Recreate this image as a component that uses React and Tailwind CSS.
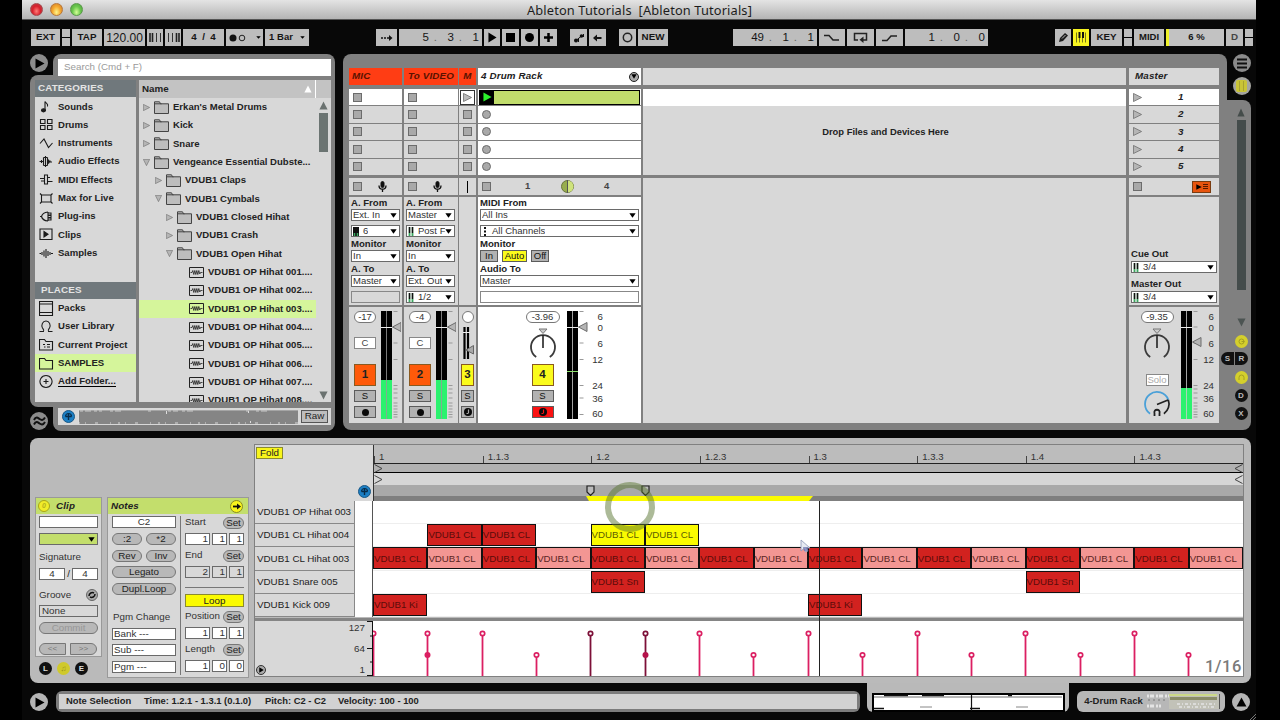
import clsx from 'clsx';

const categories = [
  ['Sounds', 'note'],
  ['Drums', 'pads'],
  ['Instruments', 'wave'],
  ['Audio Effects', 'audio'],
  ['MIDI Effects', 'midi'],
  ['Max for Live', 'max'],
  ['Plug-ins', 'plug'],
  ['Clips', 'clip'],
  ['Samples', 'sample'],
];

const places = [
  ['Packs', 'pack'],
  ['User Library', 'user'],
  ['Current Project', 'project'],
  ['SAMPLES', 'folder'],
  ['Add Folder...', 'add'],
];

const tree = [
  { name: "Erkan's Metal Drums", level: 0 },
  { name: 'Kick', level: 0 },
  { name: 'Snare', level: 0 },
  { name: 'Vengeance Essential Dubste...', level: 0, open: true },
  { name: 'VDUB1 Claps', level: 1 },
  { name: 'VDUB1 Cymbals', level: 1, open: true },
  { name: 'VDUB1 Closed Hihat', level: 2 },
  { name: 'VDUB1 Crash', level: 2 },
  { name: 'VDUB1 Open Hihat', level: 2, open: true },
  { name: 'VDUB1 OP Hihat 001....', file: true },
  { name: 'VDUB1 OP Hihat 002....', file: true },
  { name: 'VDUB1 OP Hihat 003....', file: true, selected: true },
  { name: 'VDUB1 OP Hihat 004....', file: true },
  { name: 'VDUB1 OP Hihat 005....', file: true },
  { name: 'VDUB1 OP Hihat 006....', file: true },
  { name: 'VDUB1 OP Hihat 007....', file: true },
  { name: 'VDUB1 OP Hihat 008....', file: true },
];

const levels = ['pl-[4px]', 'pl-[16px]', 'pl-[27px]'];

const iconPaths = {
  note: 'M6 11.5V2.5c1 2 3.500 2 2.500 5',
  pads: 'M1.500 2.500h4.500v4h-4.500zM8.500 2.500h4.500v4h-4.500zM1.500 8.500h4.500v4h-4.500zM8.500 8.500h4.500v4h-4.500z',
  wave: 'M1 7.500L5 3L9.500 11.500L13.500 7',
  audio: 'M0.500 7.500h2v-1.500v3v-1.500h2M8.500 7.500h1v-2v4l1.500-3v1.500h2M4.500 3.500v8M6.500 2v11M8.500 3.500v8M4.500 3.500h4M4.500 11.500h4',
  midi: 'M1 6.500h4.500M2 9h3.500M5.500 3h3v9h-3zM8.500 5.500h2.500M8.500 9.500h5',
  max: 'M2.500 4h9.500v7h-9.500zM2.500 4L1 2.500M12 4l1.500-1.500M2.500 11L1 12.500M12 11l1.500 1.500',
  plug: 'M1 7.500h1.500M9 3C4 3.500 3 5.500 2.500 7.500C3 9.500 4 11.500 9 12M9 3v9M9 4h3v2h-3M9 6.500h3v2h-3M9 9h3v2h-3',
  clip: 'M1 2h12v10.500h-12z',
  sample: 'M0.500 7.500h1.500M3 6v3M5 4.500v6M7 3v9M9 5v5M11 6v3M12 7.500h2',
  pack: 'M0.500 0.500h13v14h-13zM0.500 3h13M0.500 11.500h13',
  user: 'M0.500 12.500h4c1-1 0-2-1-3.500c-1.500-3 0-7 3.500-7s5 4 3.500 7c-1 1.500-2 2.500-1 3.500h4',
  project: 'M0.500 2.500h5l1.500 2h6.500v8.500h-13zM4 7.500h2M8 7.500h3M5 10h1.500M8 10h3',
  folder: 'M0.500 2.500h5l1.500 2h6.500v8.500h-13z',
  add: 'M7 1.500a6 6 0 1 0 0.010 0M4.500 7.500h5M7 5v5',
};

function CatIcon({ name }) {
  return (
    <svg width="15" height="15" viewBox="0 0 15 15" fill="none" stroke="#1b1b1b" strokeWidth="1.1">
      <path d={iconPaths[name]} />
      {name === 'note' && <ellipse cx="4.5" cy="11.3" rx="2" ry="1.6" fill="#1b1b1b" />}
      {name === 'clip' && <path d="M5 4.500v5.500l4-2.750z" fill="#1b1b1b" />}
    </svg>
  );
}

function Tri({ dir = 'down', w = 8, h = 6, fill = '#000', stroke }) {
  const d = {
    down: '0.500,0.500 9.500,0.500 5,9.500',
    up: '0.500,9.500 9.500,9.500 5,0.500',
    right: '0.500,0.500 9.500,5 0.500,9.500',
    left: '9.500,0.500 0.500,5 9.500,9.500',
  }[dir];
  return (
    <svg width={w} height={h} viewBox="0 0 10 10" preserveAspectRatio="none" className="shrink-0">
      <polygon points={d} fill={fill} stroke={stroke} />
    </svg>
  );
}

function Folder() {
  return (
    <svg width="15" height="13" viewBox="0 0 15 13" fill="#bdbdbd" stroke="#444" strokeWidth="1" className="shrink-0">
      <path d="M0.500 12.500V0.800h5l1 2h8v9.700z" />
      <path d="M0.500 2.800h7" />
    </svg>
  );
}

function SampleFile() {
  return (
    <svg width="15" height="11" viewBox="0 0 15 11" fill="none" stroke="#222" className="shrink-0">
      <path d="M0.500 0.500h14v10h-14z" />
      <path d="M1.500 5.500l1.500 0l0.800-2l1 4l1-4l1 4l1-4l1 4l1-4l1 3.500l0.700-1.500h2" strokeWidth="0.8" />
    </svg>
  );
}

function TB({ w, children, className = 'bg-[#bdbdbd]', font = 'text-[9.800px] font-bold' }) {
  return (
    <div className={clsx('flex h-[17px] shrink-0 items-center justify-center whitespace-pre text-[#151515]', w, font, className)}>
      {children}
    </div>
  );
}

function Round({ children, size = 'size-[18px]', className = 'bg-[#8c8c8c]' }) {
  return (
    <div className={clsx('flex shrink-0 items-center justify-center rounded-full', size, className)}>
      {children}
    </div>
  );
}

function TitleBar() {
  return (
    <div className="flex h-[20px] items-center border-b border-[#555] bg-gradient-to-b from-[#e4e4e4] to-[#b4b4b4] pl-[8px]">
      <div className="flex w-[60px] gap-[7px]">
        <div className="size-[13px] rounded-full border border-[#a3484c] bg-radial-[at_50%_65%] from-[#ff7d78] via-[#d8202c] to-[#b5434a]" />
        <div className="size-[13px] rounded-full border border-[#b8783a] bg-radial-[at_50%_75%] from-[#fff58a] via-[#f5a92f] to-[#c9762a]" />
        <div className="size-[13px] rounded-full border border-[#5a9a4a] bg-radial-[at_50%_75%] from-[#d4ff96] via-[#6cc94e] to-[#4d9b3d]" />
      </div>
      <div className="ml-[437px] pt-px font-['Noto_Sans',sans-serif] text-[12.800px] leading-none tracking-[0.150px] whitespace-pre text-[#1c1c1c]">
        {'Ableton Tutorials  [Ableton Tutorials]'}
      </div>
    </div>
  );
}

function Bars({ flip }) {
  return (
    <svg width="13" height="9" className={flip ? '-scale-x-100' : ''}>
      <path d="M1 0v9M3.500 0v9" stroke="#222" strokeWidth="1.600" />
      <path d="M7.500 0v9M11.500 0v9" stroke="#333" strokeWidth="1" />
    </svg>
  );
}

function Nub({ w }) {
  return (
    <div className={clsx('flex h-[17px] shrink-0 flex-col gap-px bg-black', w)}>
      <div className="flex-1 bg-[#bdbdbd]" />
      <div className="flex-1 bg-[#bdbdbd]" />
    </div>
  );
}

// Bar / beat / sixteenth read-out.
function Position({ w, values }) {
  return (
    <TB w={w} className="justify-end bg-[#bdbdbd] pr-[3px]" font="text-[11.500px]">
      {values.map((v, i) => (
        <span key={i} className={clsx('text-right', i && 'w-[25px]')}>
          {v}
          {i < 2 && <span className="-mr-[8px] inline-block w-[8px] text-right text-[#666]">.</span>}
        </span>
      ))}
    </TB>
  );
}

function Toolbar() {
  return (
    <div className="flex h-[34px] pt-[9px] pl-[9px]">
      <div className="flex w-[345px] gap-[2px]">
        <TB w="w-[29px]">EXT</TB>
        <Nub w="w-[8px]" />
        <TB w="w-[30px]">TAP</TB>
        <TB w="w-[41px]" font="text-[12px]">120.00</TB>
        <TB w="w-[16px]"><Bars /></TB>
        <TB w="w-[16px]"><Bars flip /></TB>
        <TB w="w-[41px]">4  /  4</TB>
        <TB w="w-[37px]" className="gap-[2px] bg-[#bdbdbd]">
          <svg width="18" height="8"><circle cx="4" cy="4" r="3.500" fill="#111" /><circle cx="13" cy="4" r="2.800" fill="none" stroke="#222" /></svg>
          <span className="w-[5px]" />
          <Tri w={5} h={3} />
        </TB>
        <TB w="w-[44px]" className="gap-[7px] bg-[#bdbdbd]" font="text-[9.500px] font-bold">1 Bar<Tri w={5} h={3} /></TB>
      </div>
      <div className="flex w-[357px] gap-[2px]">
        <TB w="w-[21px]">
          <svg width="12" height="8"><path d="M0 4h2M3 4h2M6 4h3" stroke="#111" strokeWidth="1.500" /><path d="M8 1v6l3.500-3z" fill="#111" /></svg>
        </TB>
        <Position w="w-[83px]" values={[5, 3, 1]} />
        <TB w="w-[16px]"><Tri dir="right" w={9} h={11} /></TB>
        <TB w="w-[17px]"><div className="size-[9px] bg-black" /></TB>
        <TB w="w-[17px]"><div className="size-[9px] rounded-full bg-black" /></TB>
        <TB w="w-[17px]"><svg width="9" height="9"><path d="M4.500 0v9M0 4.500h9" stroke="#000" strokeWidth="2.500" /></svg></TB>
        <TB w="w-[17px] ml-[11px]">
          <svg width="12" height="10"><circle cx="3" cy="7.500" r="2" fill="#111" /><circle cx="8.500" cy="3" r="1.800" fill="#111" /><path d="M3 7.500L8.500 3M10.500 1v3M5.500 6v3" stroke="#111" /></svg>
        </TB>
        <TB w="w-[17px]">
          <svg width="9" height="8"><path d="M2 4h6.500" stroke="#111" strokeWidth="2" /><path d="M0 4l4-3.500v7z" fill="#111" /></svg>
        </TB>
        <TB w="w-[17px] ml-[11px]"><svg width="11" height="11"><circle cx="5.500" cy="5.500" r="4.200" fill="none" stroke="#222" strokeWidth="1.500" /></svg></TB>
        <TB w="w-[30px]">NEW</TB>
      </div>
      <div className="flex w-[322px] gap-[2px]">
        <Position w="w-[84px]" values={[49, 1, 1]} />
        <TB w="w-[26px]"><svg width="16" height="8"><path d="M0 1.500h5l4 4.500h6" fill="none" stroke="#222" strokeWidth="1.500" /></svg></TB>
        <TB w="w-[27px]"><svg width="15" height="11"><path d="M5 8H1.500V1.500h12V8H10" fill="none" stroke="#222" strokeWidth="1.500" /><path d="M10.500 4.500v6.500l-4-3.200z" fill="#222" /></svg></TB>
        <TB w="w-[27px]"><svg width="16" height="8"><path d="M0 6.500h5l4-4.500h6" fill="none" stroke="#222" strokeWidth="1.500" /></svg></TB>
        <Position w="w-[83px]" values={[1, 0, 0]} />
      </div>
      <div className="flex gap-[2px]">
        <TB w="w-[16px]">
          <svg width="11" height="11"><path d="M1 10l1-4L7 1l3 2.500L5 9z" fill="#1c1c1c" /><path d="M4 6.500l3.500-3.500" stroke="#bbb" /></svg>
        </TB>
        <TB w="w-[16px]" className="bg-[#f8f520]">
          <svg width="10" height="11"><path d="M0.500 0.500v10M3.500 0.500v10M6.500 0.500v10M9.500 0.500v10" stroke="#77771a" /><path d="M2.500 0h2v6h-2zM6 0h2v6h-2z" fill="#111" /></svg>
        </TB>
        <TB w="w-[31px]">KEY</TB>
        <Nub w="w-[8px]" />
        <TB w="w-[30px]" font="text-[9.500px] font-bold">MIDI</TB>
        <TB w="w-[58px]" className="border-l-[3px] border-[#eef02a] bg-[#c2c2c2]" font="text-[9.500px] font-bold">6 %</TB>
        <TB w="w-[17px]"><span className="text-[#444]">D</span></TB>
        <Nub w="w-[8px]" />
      </div>
    </div>
  );
}

function TreeRow({ item }) {
  return (
    <div
      className={clsx(
        'flex h-[18.340px] w-[177px] shrink-0 items-center text-[9.550px] font-bold whitespace-nowrap',
        item.file ? 'pl-[50px]' : levels[item.level],
        item.selected && 'bg-[#d5f59b]'
      )}
    >
      {item.file ? (
        <SampleFile />
      ) : (
        <>
          <Tri dir={item.open ? 'down' : 'right'} w={7} h={7} fill="#b5b5b5" stroke="#7a7a7a" />
          <span className="w-[4px]" />
          <Folder />
        </>
      )}
      <span className="ml-[4px]">{item.name}</span>
    </div>
  );
}

function Browser() {
  return (
    <div className="w-[305px]">
      <div className="flex h-[21px] justify-between">
        <Round><span className="ml-[2px]"><Tri dir="right" w={10} h={11} /></span></Round>
        <div className="w-[282px] rounded-t-lg bg-[#808080] pt-[5px] pr-[4px] pl-[5px]">
          <div className="flex h-[17px] items-center bg-white pl-[6px] text-[9.800px] text-[#9a9a9a]">Search (Cmd + F)</div>
        </div>
      </div>
      <div className="flex h-[332px] gap-[3px] rounded-l-lg bg-[#808080] py-[5px] pr-[4px] pl-[5px]">
        <div className="w-[101px] bg-[#d8d8d8]">
          <div className="flex h-[17px] items-center bg-[#70787c] pl-[3px] text-[9.800px] font-bold tracking-[0.150px] text-[#e4e4e4]">CATEGORIES</div>
          {categories.map(([name, icon]) => (
            <div key={name} className="flex h-[18.340px] items-center gap-[4px] pt-px pl-[4px] text-[9.550px] font-bold">
              <CatIcon name={icon} />
              {name}
            </div>
          ))}
          <div className="mt-[20px] flex h-[17px] items-center bg-[#70787c] pl-[6px] text-[9.800px] font-bold tracking-[0.150px] text-[#e4e4e4]">PLACES</div>
          {places.map(([name, icon]) => (
            <div
              key={name}
              className={clsx('flex h-[18.340px] items-center gap-[4px] pl-[4px] text-[9.550px] font-bold whitespace-nowrap', name === 'SAMPLES' && 'bg-[#d5f59b]')}
            >
              <CatIcon name={icon} />
              <span className={icon === 'add' ? 'border-b border-black leading-[11px]' : ''}>{name}</span>
            </div>
          ))}
        </div>
        <div className="w-[192px] bg-[#d8d8d8]">
          <div className="flex h-[18px] bg-[#c3c3c3] text-[9.800px] font-bold">
            <div className="flex w-[177px] items-center justify-between border-r border-white pr-[3px] pl-[3px]">
              Name
              <Tri dir="up" w={8} h={8} fill="#fff" />
            </div>
          </div>
          <div className="flex h-[304px] overflow-hidden">
            <div className="flex flex-col">
              {tree.map(item => (
                <TreeRow key={item.name} item={item} />
              ))}
            </div>
            <div className="flex h-[304px] w-[15px] flex-col items-center pt-[3px] pb-[2px]">
              <Tri dir="up" w={9} h={9} fill="#6b7270" />
              <div className="mt-[3px] h-[39px] w-[9px] bg-[#6b7472]" />
              <div className="flex-1" />
              <Tri w={9} h={9} fill="#6b7270" />
            </div>
          </div>
        </div>
      </div>
      <div className="flex h-[24px] justify-between">
        <Round size="size-[18px] mt-[5px]">
          <svg width="13" height="10" fill="none" stroke="#111" strokeWidth="2"><path d="M1 4c2-4 4-2 5.500-1s3.500 2 5.500-1.500M1 8.500c2-4 4-2 5.500-1s3.500 2 5.500-1.500" /></svg>
        </Round>
        <div className="w-[282px] rounded-b-lg bg-[#808080] pt-[1px] pr-[4px] pl-[5px]">
          <div className="flex h-[17px] items-center bg-[#d8d8d8] pl-[4px]">
            <PreviewIcon />
            <svg width="220" height="14" className="ml-[3px] bg-[#858585]">
              <path d="M0 0.500h220" stroke="#a5a5a5" />
              <path d="M2 1h22M32 1h12M70 1h3M90 1h10M104 1h12M168 1h5M178 1h14" stroke="#ccc" strokeDasharray="3 2 6 3" />
              <path d="M0 13h220" stroke="#d8d8d8" strokeDasharray="2 5 1 9 3 12 1 7" />
              <path d="M0.500 0v14M88.500 1v3M170.500 1v2M172.500 11v2" stroke="#ddd" />
            </svg>
            <div className="ml-[3px] flex h-[13px] w-[27px] items-center justify-center border border-[#555] bg-[#bdbdbd] text-[9.800px]">Raw</div>
          </div>
        </div>
      </div>
    </div>
  );
}

function PreviewIcon() {
  return (
    <svg width="13" height="13" className="shrink-0">
      <circle cx="6.500" cy="6.500" r="6" fill="#1c7fc4" stroke="#1a5784" />
      <path d="M6.500 10V4M3.500 6.500h6" stroke="#082b47" strokeWidth="1.400" />
      <path d="M3.500 6.500A3 3 0 0 1 9.500 6.500" fill="none" stroke="#082b47" strokeWidth="1.200" />
    </svg>
  );
}

function Stop({ round }) {
  return <div className={clsx('size-[9px] border border-[#6c6c6c] bg-[#a9a9a9]', round && 'rounded-full')} />;
}

function ChanIcon({ dark }) {
  return (
    <svg width="6" height="9" className="shrink-0">
      <rect width="6" height="9" fill={dark ? '#111' : '#d8e8dc'} />
      <path d="M1.500 0v6M4.500 0v6" stroke="#111" strokeWidth="1.500" />
      <path d="M1.500 6v3M4.500 6v3" stroke="#3aa860" strokeWidth="1.500" />
    </svg>
  );
}

function Select({ children, className, icon, bg = 'bg-white' }) {
  return (
    <div className={clsx('flex h-[12px] items-center justify-between overflow-hidden border border-[#6a6a6a] pr-[2px] pl-[1px] text-[9.500px] leading-none text-[#333]', bg, className)}>
      <div className="flex items-center gap-[4px] overflow-hidden whitespace-nowrap">
        {icon}
        {children}
      </div>
      <Tri w={7} h={5} />
    </div>
  );
}

function Label({ children, className }) {
  return <div className={clsx('flex h-[12px] items-center text-[9.600px] leading-none font-bold text-[#222]', className)}>{children}</div>;
}

// One mixer column: header, five slots, stop row, routing, mixer strip.
function Track({ w, head, headClass, slots, stop, io, mixer, bg = 'bg-[#d8d8d8]' }) {
  return (
    <div className={clsx('flex shrink-0 flex-col', w)}>
      <div className={clsx('flex h-[17px] items-center text-[9.800px] font-bold tracking-[0.150px] italic', headClass)}>{head}</div>
      <div className="mt-[4px] grid h-[86px] grid-rows-5 gap-px">{slots}</div>
      <div className="mt-[3px] flex h-[17px] items-center bg-[#d8d8d8]">{stop}</div>
      <div className={clsx('mt-[2px] h-[108px]', bg)}>{io}</div>
      <div className={clsx('mt-[2px] h-[116px]', bg)}>{mixer}</div>
    </div>
  );
}

function Mic() {
  return (
    <svg width="9" height="12" fill="none" stroke="#111">
      <rect x="3" y="0.500" width="3" height="6" rx="1.500" fill="#111" />
      <path d="M1 4.500c0 5 7 5 7 0M4.500 8v3" strokeWidth="1.300" />
    </svg>
  );
}

const tickYs = [0.5, 16, 32, 48.5, 74.5, 78, 82, 87, 92, 95, 98, 101, 103.5, 106];
const mainTicks = [0.5, 16, 32, 48.5, 74.5, 87, 103.5];
const scale = [[6, 5], [0, 16.5], [6, 32], [12, 48.500], [24, 74.500], [36, 87.500], [60, 102.500]];

function Meter({ green, fader = 16, peak, labels, ticks = tickYs, width = 20 }) {
  return (
    <svg width={width} height="108" className="shrink-0">
      <rect width="11" height="108" fill="#000" />
      {green && <rect y={green} width="11" height={108 - green} fill="#2bf26e" />}
      <path d="M5.500 0v108" stroke={labels ? '#ccc' : '#999'} strokeWidth="0.800" />
      <path d="M0 16.500h11" stroke="#eee" strokeWidth="1" />
      {peak && <path d={`M0 ${peak}h11`} stroke="#8be06a" />}
      {ticks.map(y => (
        <path key={y} d={`M12.500 ${y}h4`} stroke="#999" />
      ))}
      <polygon points={`11.500,${fader} 20,${fader - 4.5} 20,${fader + 4.5}`} fill="#b5b5b5" stroke="#6c6c6c" />
      {labels &&
        scale.map(([n, y]) => (
          <text key={y} x={width - 1} y={y + 3.5} textAnchor="end" fontSize="9.7" fill="#333">{n}</text>
        ))}
    </svg>
  );
}

function Pill({ children, w = 'w-[22px]' }) {
  return (
    <div className={clsx('flex h-[12px] items-center justify-center rounded-full border border-[#777] bg-white text-[9.500px] leading-none text-[#333]', w)}>
      {children}
    </div>
  );
}

function Knob() {
  return (
    <svg width="28" height="34" fill="none">
      <polygon points="10,1 18,1 14,5.500" fill="#ccc" stroke="#777" />
      <path d="M7.200 29A12 12 0 1 1 20.800 29" stroke="#3a3a3a" strokeWidth="1.800" />
      <path d="M14 7v13" stroke="#222" strokeWidth="1.600" />
    </svg>
  );
}

function NumBox({ n, className }) {
  return <div className={clsx('flex h-[22px] items-center justify-center border border-[#8a5a20] text-[11.500px] font-bold text-[#222]', className)}>{n}</div>;
}

function SmallBtn({ children, className }) {
  return <div className={clsx('flex h-[12px] items-center justify-center border border-[#5c5c5c] text-[9.500px] leading-none text-[#111]', className)}>{children}</div>;
}

const Dot = () => <div className="size-[7px] rounded-full bg-[#0a0a0a]" />;

const Spin = ({ mark = '#aaa' }) => (
  <svg width="8" height="8"><circle cx="4" cy="4" r="4" fill="#0a0a0a" /><path d="M4.500 1.500v3.500M2.500 5.500h2" stroke={mark} strokeWidth="1.200" /></svg>
);

function Strip({ n, vol, pad }) {
  return (
    <div className={clsx('flex pt-[4px]', pad)}>
      <div className="w-[22px]">
        <Pill>{vol}</Pill>
        <div className="mt-[14px] flex h-[12px] items-center justify-center border border-[#888] bg-white text-[9.500px] leading-none text-[#444]">C</div>
        <NumBox n={n} className="mt-[15px] bg-[#ff5a0a]" />
        <SmallBtn className="mt-[4px] bg-[#b2b2b2]">S</SmallBtn>
        <SmallBtn className="mt-[4px] bg-[#b2b2b2]"><Dot /></SmallBtn>
      </div>
      <span className="w-[5px]" />
      <Meter green={69} />
    </div>
  );
}

function narrowSlots() {
  return [0, 1, 2, 3, 4].map(i => (
    <div key={i} className={clsx('flex items-center pl-[4px]', i === 0 ? 'bg-white' : 'bg-[#d8d8d8]')}>
      <Stop />
    </div>
  ));
}

function Session() {
  return (
    <div className="flex h-[376px] w-[884px] rounded-l-lg rounded-tr-lg bg-[#808080] pt-[14px] pl-[6px]">
      <Track
        w="w-[53px] mr-[2px]"
        head="MIC"
        headClass="bg-[#ff3d14] pl-[3px] text-[#5a1200]"
        slots={narrowSlots()}
        stop={<div className="flex items-center pl-[4px]"><Stop /><span className="w-[16px]" /><Mic /></div>}
        io={
          <div className="w-[51px] pl-[2px]">
            <Label>A. From</Label>
            <Select>Ext. In</Select>
            <Select className="mt-[4px]" icon={<ChanIcon dark />}>6</Select>
            <Label className="mt-[1px]">Monitor</Label>
            <Select>In</Select>
            <Label className="mt-[1px]">A. To</Label>
            <Select>Master</Select>
            <div className="mt-[4px] h-[12px] border border-[#888]" />
          </div>
        }
        mixer={<Strip n="1" vol="-17" pad="pl-[5px]" />}
      />
      <Track
        w="w-[54px] mr-[1px]"
        head="To VIDEO"
        headClass="bg-[#ff3d14] pl-[4px] text-[#5a1200] whitespace-nowrap"
        slots={narrowSlots()}
        stop={<div className="flex items-center pl-[4px]"><Stop /><span className="w-[16px]" /><Mic /></div>}
        io={
          <div className="w-[51px] pl-[2px]">
            <Label>A. From</Label>
            <Select>Master</Select>
            <Select className="mt-[4px]" icon={<ChanIcon />}>Post F</Select>
            <Label className="mt-[1px]">Monitor</Label>
            <Select>In</Select>
            <Label className="mt-[1px]">A. To</Label>
            <Select>Ext. Out</Select>
            <Select className="mt-[4px]" icon={<ChanIcon />}>1/2</Select>
          </div>
        }
        mixer={<Strip n="2" vol="-4" pad="pl-[5px]" />}
      />
      <Track
        w="w-[17px] mr-[2px]"
        head="M"
        headClass="bg-[#ff3d14] justify-center text-[#5a1200]"
        slots={[0, 1, 2, 3, 4].map(i => (
          <div key={i} className={clsx('flex items-center justify-center', i ? 'bg-[#d8d8d8]' : 'bg-white')}>
            {i ? <Stop /> : <div className="flex size-[15px] items-center justify-center border border-[#333]"><Tri dir="right" w={9} h={9} fill="#bbb" stroke="#777" /></div>}
          </div>
        ))}
        stop={<div className="mx-auto h-[12px] w-px bg-black" />}
        mixer={
          <div className="flex flex-col items-center pt-[4px]">
            <div className="size-[12px] rounded-full border border-[#777] bg-white" />
            <svg width="13" height="34" className="mt-[3px] ml-[4px]">
              <path d="M1.500 1v32M5 1v32" stroke="#000" strokeWidth="2.200" />
              <path d="M0 6.500h7" stroke="#eee" />
              <polygon points="3,24 10.500,19.500 10.500,28" fill="#aaa" stroke="#666" />
            </svg>
            <NumBox n="3" className="mt-[4px] w-[13px] bg-[#fbfb1c]" />
            <SmallBtn className="mt-[4px] w-[13px] bg-[#b2b2b2]">S</SmallBtn>
            <SmallBtn className="mt-[4px] w-[13px] bg-[#b2b2b2]"><Spin /></SmallBtn>
          </div>
        }
      />
      <Track
        w="w-[163px] mr-[2px]"
        bg="bg-white"
        head={
          <>
            <span className="flex-1">4 Drum Rack</span>
            <Round size="size-[10px]" className="border border-[#222] bg-[#aaa]"><Tri w={6} h={5} /></Round>
          </>
        }
        headClass="bg-white pl-[3px] pr-[2px] text-[#222]"
        slots={[0, 1, 2, 3, 4].map(i =>
          i ? (
            <div key={i} className="flex items-center bg-white pl-[4px]"><Stop round /></div>
          ) : (
            <div key={i} className="flex items-center bg-white px-px">
              <div className="flex h-[15px] w-full border border-black bg-[#c1dd6c]">
                <div className="flex w-[14px] items-center justify-center bg-black"><Tri dir="right" w={9} h={10} fill="#2cf02c" /></div>
              </div>
            </div>
          )
        )}
        stop={
          <div className="flex items-center pl-[4px] text-[9.500px] font-bold text-[#444]">
            <Stop />
            <span className="ml-[34px] w-[36px]">1</span>
            <svg width="13" height="13"><circle cx="6.500" cy="6.500" r="6" fill="#98ad4e" stroke="#6a753e" /><path d="M6.500 0.500a6 6 0 0 1 0 12z" fill="#cfe37c" /><path d="M6.500 0v13" stroke="#555" /></svg>
            <span className="ml-[30px]">4</span>
          </div>
        }
        io={
          <div className="w-[161px] pl-[2px]">
            <Label>MIDI From</Label>
            <Select>All Ins</Select>
            <Select className="mt-[4px]" icon={<svg width="6" height="9"><path d="M3 0v9" stroke="#111" strokeWidth="2" strokeDasharray="2 1.500" /></svg>}>All Channels</Select>
            <Label className="mt-[1px]">Monitor</Label>
            <div className="flex gap-[4px]">
              <SmallBtn className="w-[18px] bg-[#b2b2b2]">In</SmallBtn>
              <SmallBtn className="w-[25px] bg-[#fbfb1c]">Auto</SmallBtn>
              <SmallBtn className="w-[18px] bg-[#b2b2b2]">Off</SmallBtn>
            </div>
            <Label className="mt-[1px]">Audio To</Label>
            <Select>Master</Select>
            <div className="mt-[4px] h-[12px] border border-[#888]" />
          </div>
        }
        mixer={
          <div className="flex pt-[4px] pl-[47px]">
            <div className="flex w-[35px] flex-col items-center">
              <Pill w="w-[34px]">-3.96</Pill>
              <div className="mt-[5px]"><Knob /></div>
              <NumBox n="4" className="mt-[2px] w-[22px] bg-[#fbfb1c]" />
              <SmallBtn className="mt-[4px] w-[22px] bg-[#b2b2b2]">S</SmallBtn>
              <SmallBtn className="mt-[4px] w-[22px] bg-[#fb1212]"><Spin mark="#fb1212" /></SmallBtn>
            </div>
            <span className="w-[7px]" />
            <Meter labels width={37} peak={60.500} ticks={mainTicks} />
          </div>
        }
      />
      <div className="mr-[3px] flex w-[483px] flex-col">
        <div className="h-[17px] bg-[#d8d8d8]" />
        <div className="mt-[4px] h-[17px] bg-white" />
        <div className="flex h-[69px] justify-center bg-[#d8d8d8] pt-[19px] pl-[2px] text-[9.400px] font-bold text-[#222]">Drop Files and Devices Here</div>
        <div className="mt-[3px] h-[245px] bg-[#d8d8d8]" />
      </div>
      <Track
        w="w-[90px]"
        head="Master"
        headClass="bg-[#d8d8d8] pl-[6px] text-[#222]"
        slots={[1, 2, 3, 4, 5].map(n => (
          <div key={n} className={clsx('flex items-center pl-[4px] text-[9.800px] font-bold italic', n === 1 ? 'bg-white' : 'bg-[#d8d8d8]')}>
            <Tri dir="right" w={9} h={9} fill="#b5b5b5" stroke="#777" />
            <span className="ml-[36px]">{n}</span>
          </div>
        ))}
        stop={
          <div className="flex items-center pl-[4px]">
            <Stop />
            <div className="ml-[50px] flex h-[12px] w-[19px] items-center justify-center gap-px border border-[#7a3c10] bg-[#e8550f]">
              <Tri dir="right" w={6} h={6} />
              <svg width="5" height="7"><path d="M0 1.500h5M0 3.500h5M0 5.500h5" stroke="#5a1a00" /></svg>
            </div>
          </div>
        }
        io={
          <div className="w-[88px] pt-[51px] pl-[2px]">
            <Label>Cue Out</Label>
            <Select className="mt-[1px]" icon={<ChanIcon />}>3/4</Select>
            <Label className="mt-[5px]">Master Out</Label>
            <Select className="mt-[1px]" icon={<ChanIcon />}>3/4</Select>
          </div>
        }
        mixer={
          <div className="flex pt-[4px] pl-[11px]">
            <div className="flex w-[34px] flex-col items-center">
              <Pill w="w-[33px]">-9.35</Pill>
              <div className="mt-[5px]"><Knob /></div>
              <div className="mt-[12px] flex h-[12px] w-[23px] items-center justify-center border border-[#888] bg-white text-[9.500px] leading-none text-[#aaa]">Solo</div>
              <svg width="28" height="27" fill="none" className="mt-[4px]">
                <path d="M7.100 23.800A12 12 0 1 1 25.300 9.900" stroke="#4aa0d8" strokeWidth="1.800" />
                <path d="M25.300 9.900A12 12 0 0 1 20.900 23.800M14 14.500l11-4.500" stroke="#222" strokeWidth="1.700" />
                <path d="M11.500 26v-2.500c-1.500-5 6.500-5 5 0v2.500" stroke="#222" strokeWidth="1.800" />
              </svg>
            </div>
            <span className="w-[7px]" />
            <Meter green={77} fader={31} labels width={34} />
          </div>
        }
      />
    </div>
  );
}

function SideRail() {
  return (
    <div className="flex h-[376px] w-[24px] flex-col">
      <div className="flex h-[46px] flex-col items-center gap-[5px] pl-[5px]">
        <Round><svg width="10" height="11"><path d="M0 1.500h10M0 5.500h10M0 9.500h10" stroke="#111" strokeWidth="2.200" /></svg></Round>
        <Round className="bg-[#a5a5a0]"><svg width="11" height="12"><rect width="11" height="12" rx="2" fill="#c9c436" /><path d="M3.500 1v10M7.500 1v10" stroke="#a8a230" /></svg></Round>
      </div>
      <div className="flex flex-1 flex-col items-center rounded-r-lg bg-[#808080] pt-[8px] pl-[4px]">
        <Tri dir="up" w={8} h={9} fill="#444c4a" />
        <div className="mt-[3px] h-[170px] w-[9px] bg-[#444c4b]" />
        <div className="mt-[28px]"><Tri w={9} h={9} fill="#4c5452" /></div>
        <Badge className="mt-[8px] bg-[#d4cf2c] text-[#a5a020]">
          <svg width="7" height="7" fill="none" stroke="#a5a020"><circle cx="3.500" cy="3.500" r="2.500" /><path d="M3.500 3.500h3" /></svg>
        </Badge>
        <div className="mt-[4px] -ml-[13px] flex">
          <Badge className="w-[12px] rounded-r-none bg-[#111] text-[#bbb]">S</Badge>
          <Badge className="ml-px w-[12px] rounded-l-none bg-[#111] text-[#bbb]">R</Badge>
        </div>
        <Badge className="mt-[6px] bg-[#d4cf2c]">
          <svg width="7" height="7" fill="none" stroke="#a5a020"><path d="M1 6V3.500a2.500 2.500 0 0 1 5 0V6" /></svg>
        </Badge>
        <Badge className="mt-[5px] bg-[#111] text-[#bbb]">D</Badge>
        <Badge className="mt-[5px] bg-[#111] text-[#bbb]">X</Badge>
      </div>
    </div>
  );
}

function Badge({ children, className }) {
  return <div className={clsx('flex h-[13px] min-w-[13px] items-center justify-center rounded-full text-[8px] leading-none font-bold', className)}>{children}</div>;
}

function Field({ children, className, bg = 'bg-white' }) {
  return <div className={clsx('flex h-[12px] items-center border border-[#6a6a6a] text-[9.800px] leading-none text-[#333]', bg, className)}>{children}</div>;
}

function Oval({ children, className, radius = 'rounded-full', font = 'text-[9.800px] text-[#222]' }) {
  return <div className={clsx('flex h-[12px] items-center justify-center border border-[#777] bg-[#b8b8b8] leading-none', radius, font, className)}>{children}</div>;
}

function ClipBox() {
  return (
    <div className="mt-[59px] w-[67px] text-[9.800px]">
      <div className="h-[160px] border border-[#999] bg-[#d8d8d8]">
        <div className="flex h-[16px] items-center gap-[6px] bg-[#c3de6c] pl-[2px] font-bold tracking-[0.150px] italic">
          <Round size="size-[12px]" className="border border-[#a8a418] bg-[#f0ec2a] text-[7px] text-[#b5b020]">0</Round>
          Clip
        </div>
        <div className="px-[3px] pt-[2px]">
          <Field />
          <Select className="mt-[5px]" bg="bg-[#c3de6c]" />
          <div className="mt-[6px] flex h-[13px] items-center text-[9.800px] text-[#333]">Signature</div>
          <div className="mt-[3px] flex items-center justify-between">
            <Field className="w-[26px] justify-center">4</Field>/
            <Field className="w-[26px] justify-center">4</Field>
          </div>
          <div className="mt-[7px] flex h-[13px] items-center justify-between text-[9.800px] text-[#333]">
            Groove
            <Round size="size-[12px]" className="border border-[#666] bg-[#aaa]">
              <svg width="8" height="8" fill="none" stroke="#111" strokeWidth="1.500"><path d="M1 5C1 2 4 1 6 2M7 3C7 6 4 7 2 6" /></svg>
            </Round>
          </div>
          <Field className="mt-[3px] pl-[2px]" bg="bg-[#d8d8d8]">None</Field>
          <Oval className="mt-[5px]" font="text-[9.800px] text-[#979797]">Commit</Oval>
          <div className="mt-[9px] flex gap-[4px]">
            <Oval className="w-[27px]" radius="rounded-l-full" font="text-[8px] text-[#777]">&lt;&lt;</Oval>
            <Oval className="w-[27px]" radius="rounded-r-full" font="text-[8px] text-[#777]">&gt;&gt;</Oval>
          </div>
        </div>
      </div>
      <div className="mt-[5px] flex gap-[5px] pl-[4px]">
        <Badge className="bg-[#111] text-[#ddd]">L</Badge>
        <Badge className="bg-[#cfc92c] text-[#9a951c]">♫</Badge>
        <Badge className="bg-[#111] text-[#ddd]">E</Badge>
      </div>
    </div>
  );
}

function SetRow({ label, values, dim, className }) {
  return (
    <div className={className}>
      <div className="flex h-[13px] items-center justify-between text-[9.800px] text-[#333]">
        {label}
        <Oval className="w-[21px]">Set</Oval>
      </div>
      <div className="mt-[4px] flex justify-between">
        {values.map((v, i) => (
          <Field key={i} className={clsx('justify-end pr-px', i ? 'w-[15px]' : 'w-[25px]')} bg={dim ? 'bg-[#d8d8d8]' : 'bg-white'}>{v}</Field>
        ))}
      </div>
    </div>
  );
}

function NotesBox() {
  return (
    <div className="mt-[59px] ml-[5px] h-[181px] w-[142px] border border-[#999] bg-[#d8d8d8] text-[9.800px]">
      <div className="flex h-[16px] items-center justify-between bg-[#c3de6c] pr-[5px] pl-[3px] font-bold tracking-[0.150px] italic">
        Notes
        <Round size="size-[13px]" className="border border-[#8a8a20] bg-[#f8f51c]">
          <svg width="8" height="7"><path d="M0 3.500h5" stroke="#111" strokeWidth="1.800" /><path d="M4 0.500v6l4-3z" fill="#111" /></svg>
        </Round>
      </div>
      <div className="flex pt-[2px] pl-[4px]">
        <div className="w-[64px]">
          <Field className="justify-center">C2</Field>
          <div className="mt-[5px] grid grid-cols-2 gap-x-[4px] gap-y-[4.500px]">
            <Oval>:2</Oval><Oval>*2</Oval>
            <Oval>Rev</Oval><Oval>Inv</Oval>
            <Oval className="col-span-2">Legato</Oval>
            <Oval className="col-span-2">Dupl.Loop</Oval>
          </div>
          <div className="mt-[17px] flex h-[12px] items-center pl-px text-[9.800px] whitespace-nowrap text-[#333]">Pgm Change</div>
          <Field className="mt-[4px] pl-px">Bank ---</Field>
          <Field className="mt-[4.500px] pl-px">Sub ---</Field>
          <Field className="mt-[4.500px] pl-px">Pgm ---</Field>
        </div>
        <div className="ml-[4px] h-[159px] w-px bg-[#777]" />
        <div className="ml-[4px] w-[59px]">
          <SetRow label="Start" values={[1, 1, 1]} />
          <SetRow label="End" values={[2, 1, 1]} dim className="mt-[4px]" />
          <div className="mt-[9px] h-px bg-[#777]" />
          <div className="mt-[6px] flex h-[13px] items-center justify-center border border-[#8a8a30] bg-[#fbfb00] leading-none">Loop</div>
          <SetRow label="Position" values={[1, 1, 1]} className="mt-[3px]" />
          <SetRow label="Length" values={[1, 0, 0]} className="mt-[4px]" />
        </div>
      </div>
    </div>
  );
}

const keys = ['VDUB1 OP Hihat 003', 'VDUB1 CL Hihat 004', 'VDUB1 CL Hihat 003', 'VDUB1 Snare 005', 'VDUB1 Kick 009'];

const noteColors = {
  red: 'bg-[#d2221f] text-[#5a0c0a]',
  pink: 'bg-[#f39693] text-[#5a2523]',
  yellow: 'bg-[#fbfb00] text-[#5b5b00]',
};

const noteRows = [
  [],
  [[2, 'red'], [3, 'red'], [5, 'yellow'], [6, 'yellow']].map(([c, k]) => [c, k, 'VDUB1 CL']),
  Array.from({ length: 16 }, (_, i) => [i + 1, i % 2 ? 'pink' : 'red', 'VDUB1 CL']),
  [[5, 'red', 'VDUB1 Sn'], [13, 'red', 'VDUB1 Sn']],
  [[1, 'red', 'VDUB1 Ki'], [9, 'red', 'VDUB1 Ki']],
];

const rulerLabels = ['1', '1.1.3', '1.2', '1.2.3', '1.3', '1.3.3', '1.4', '1.4.3'];

function Ruler() {
  return (
    <div className="w-[870px] border-l border-[#333]">
      <div className="grid h-[19px] grid-cols-8 border-b border-[#222] bg-[#bcbcbc]">
        {rulerLabels.map(l => (
          <div key={l} className="flex items-end">
            <div className="h-[7px] w-px bg-[#444]" />
            <span className="ml-[4px] text-[9.600px] leading-[12px] text-[#333]">{l}</span>
          </div>
        ))}
      </div>
      <div className="flex h-[9px] items-center justify-between border-b border-black bg-[#b1b1b1]">
        <Chevron />
        <Chevron left />
      </div>
      <div className="flex h-[12px] items-center justify-between bg-[#d6d6d6]">
        <Chevron />
        <Chevron left />
      </div>
      <div className="h-[11px] bg-[#a9a9a9] pl-[212px]">
        <svg width="70" height="11" fill="#bbb" stroke="#222" strokeWidth="1.200">
          <path d="M1 1h7v6l-3.500 3.500L1 7zM56 1h7v6l-3.500 3.500L56 7z" />
        </svg>
      </div>
      <div className="h-[5px] bg-[#7f7f7f] pl-[212px]">
        <svg width="228" height="5"><polygon points="0,0 227,0 223,5 3,5" fill="#fbfb00" /></svg>
      </div>
    </div>
  );
}

function Chevron({ left }) {
  return (
    <svg width="9" height="9" className={left ? '-scale-x-100' : ''}>
      <path d="M0.500 0.500L8 4.500L0.500 8.500" fill="none" stroke="#444" />
    </svg>
  );
}

function Velocity() {
  const step = 54.35;
  return (
    <svg width="870" height="55" className="bg-white">
      {Array.from({ length: 16 }, (_, i) => {
        const x = Math.round(i * step) + 0.5;
        const high = i % 2 === 0 || i === 1 || i === 5;
        const color = i === 4 || i === 5 ? '#7d1038' : '#db1f62';
        return (
          <g key={i}>
            <path d={`M${x} ${high ? 15 : 36}V55`} stroke={color} strokeWidth="1.800" />
            <circle cx={x} cy={high ? 12.5 : 34} r="2.200" fill="#fff" stroke={color} strokeWidth="1.700" />
            {(i === 1 || i === 5) && <circle cx={x} cy="34" r="3" fill={i === 5 ? '#b5124a' : color} />}
          </g>
        );
      })}
      <text x="869" y="51" textAnchor="end" fontSize="16.5" letterSpacing="0.600" fill="#7a7a7a" fontWeight="500" fontFamily="Roboto, sans-serif">1/16</text>
    </svg>
  );
}

function Editor() {
  return (
    <div className="relative mt-[6px] ml-[5px] flex h-[233px] w-[990px] flex-col border border-[#808080]">
      <div className="flex h-[56px]">
        <div className="w-[118px] shrink-0 bg-[#d8d8d8] pt-[2px] pl-[1px]">
          <div className="flex h-[12px] w-[27px] items-center justify-center border border-[#8a8a30] bg-[#f8f51c] text-[9.800px] leading-none">Fold</div>
          <div className="mt-[26px] ml-[102px]"><PreviewIcon /></div>
        </div>
        <Ruler />
      </div>
      <div className="flex h-[117px]">
        <div className="flex w-[100px] shrink-0 flex-col border-r border-[#888] bg-[#d8d8d8]">
          {keys.map(k => (
            <div key={k} className="flex h-[23.200px] items-center border-b border-[#888] pt-px pl-[2px] text-[9.800px] text-[#222]">{k}</div>
          ))}
        </div>
        <div className="w-[18px] shrink-0 border-r border-[#555] bg-white" />
        <div className="w-[870px] bg-white">
          {noteRows.map((row, i) => (
            <div key={i} className="grid h-[23.200px] grid-cols-16 border-b border-[#eee]">
              {row.map(([col, color, text]) => (
                <div
                  key={col}
                  className={clsx('row-start-1 flex h-[22px] items-center overflow-hidden border border-[#111] text-[9.700px] leading-none whitespace-nowrap', noteColors[color])}
                  style={{ gridColumnStart: col }}
                >
                  <span>{text}</span>
                </div>
              ))}
            </div>
          ))}
        </div>
      </div>
      <div className="mt-px h-[3px] bg-[#858585]" />
      <div className="flex h-[55px]">
        <div className="flex w-[118px] shrink-0 items-end bg-[#d8d8d8] pl-[1px]">
          <Round size="size-[10px] mb-[1px]" className="border border-[#333] bg-[#aaa]"><Tri dir="right" w={5} h={6} /></Round>
          <div className="ml-auto flex h-[55px] flex-col justify-between pt-px pr-[2px] text-right text-[9.800px] leading-[12px] text-[#333]">
            <span>127</span>
            <span>64</span>
            <span>1</span>
          </div>
          <svg width="6" height="55"><path d="M5.500 0v55M0 0.500h6M3 15h3M0 27.500h6M3 41h3M0 54.500h6" stroke="#111" /></svg>
        </div>
        <Velocity />
      </div>
      {/* playhead, click ring and mouse pointer float over the grid */}
      <div className="absolute top-[56px] left-[564px] h-[175px] w-px bg-[#222]" />
      <div className="absolute top-[37px] left-[350px] size-[50px] rounded-full border-[6px] border-[#5a7632]/50" />
      <svg width="11" height="15" className="absolute top-[94px] left-[545px]">
        <path d="M1 1v11l3-2.500l1.500 3.500l2.500-1l-1.500-3h3.500z" fill="#e6eaf2" stroke="#8a95b5" strokeWidth="0.800" />
        <path d="M3 8h5v4h-4z" fill="#6a72b0" fillOpacity="0.700" />
      </svg>
    </div>
  );
}

function StatusBar() {
  return (
    <div className="flex h-[37px] pl-[8px]">
      <Round size="size-[18px] mt-[10px]" className="bg-[#b5b5b5]"><span className="ml-[2px]"><Tri dir="right" w={10} h={11} /></span></Round>
      <div className="mt-[8px] ml-[8px] h-[21px] w-[805px] rounded-md bg-[#7c7c7c] p-[3px]">
        <div className="flex h-[15px] items-center bg-[#d2d2d2] pl-[7px] text-[9.400px] font-bold text-[#222]">
          <span className="w-[78px]">Note Selection</span>
          <span className="w-[121px]">Time: 1.2.1 - 1.3.1 (0.1.0)</span>
          <span className="w-[73px]">Pitch: C2 - C2</span>
          <span>Velocity: 100 - 100</span>
        </div>
      </div>
      <div className="ml-[7px] h-[29px] w-[202px] rounded-b-md bg-[#b9b9b9] pt-[10px] pl-[5px]">
        <svg width="193" height="19">
          <rect x="1" y="1" width="191" height="17" fill="#fff" stroke="#000" strokeWidth="2" />
          <path d="M12 2.500h24M50 2.500h22M2 15.500h10M98 15.500h10M136 2.500h4" stroke="#111" strokeWidth="1.500" />
          <path d="M2 4h188" stroke="#333" strokeWidth="0.700" />
          <path d="M99.500 2v16" stroke="#111" strokeWidth="1.200" />
          <path d="M48 14h12M144 14h12" stroke="#888" />
        </svg>
      </div>
      <div className="mt-[8px] ml-[8px] flex h-[21px] w-[148px] items-center rounded-md bg-[#b7b7b7] pl-[7px] text-[9.500px] font-bold whitespace-nowrap text-[#222]">
        4-Drum Rack
        <svg width="74" height="15" className="ml-[4px]">
          <path d="M0 2h22M0 12h14" stroke="#e4e4e4" strokeWidth="3" strokeDasharray="2 1 4 2" />
          <path d="M1 6h20" stroke="#777" strokeDasharray="2 3" />
          <rect x="22" y="0" width="50" height="15" fill="#c2c2b8" />
          <path d="M22 1h48" stroke="#cfe07a" strokeWidth="1.500" />
          <path d="M23 4.500h47" stroke="#8a8c68" strokeWidth="3" />
          <path d="M30 10h40M32 13h36" stroke="#e4e4e4" strokeWidth="1.500" strokeDasharray="3 2 1 2" />
          <path d="M72.500 0v15" stroke="#555" />
        </svg>
      </div>
      <Round size="size-[18px] mt-[10px] ml-[7px]" className="bg-[#b5b5b5]"><Tri dir="up" w={11} h={10} /></Round>
      <svg width="6" height="6" className="mt-auto"><path d="M0 6L6 0M3 6l3-3" stroke="#777" /></svg>
    </div>
  );
}

export default function App() {
  return (
    <div className="h-[720px] w-[1280px] overflow-hidden bg-black font-['Liberation_Sans',Arial,sans-serif] text-[#222]">
      <div className="ml-[22px] flex h-[720px] w-[1234px] flex-col bg-[#080808]">
        <TitleBar />
        <Toolbar />
        <div className="flex h-[384px] pl-[8px]">
          <Browser />
          <span className="w-[8px]" />
          <Session />
          <SideRail />
        </div>
        <div className="ml-[8px] flex h-[245px] w-[1221px] rounded-lg bg-[#bababa] pl-[5px]">
          <ClipBox />
          <NotesBox />
          <Editor />
        </div>
        <StatusBar />
      </div>
    </div>
  );
}
